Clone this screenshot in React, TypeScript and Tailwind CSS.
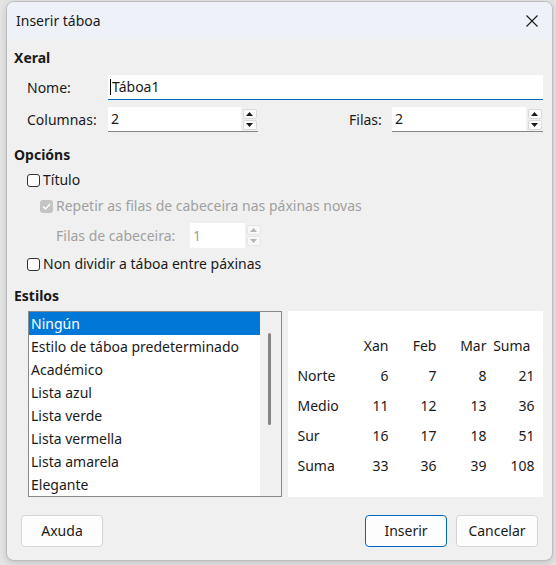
const ROWS = [
  "Ningún",
  "Estilo de táboa predeterminado",
  "Académico",
  "Lista azul",
  "Lista verde",
  "Lista vermella",
  "Lista amarela",
  "Elegante",
];

const TABLE = [
  ["", "Xan", "Feb", "Mar", "Suma"],
  ["Norte", "6", "7", "8", "21"],
  ["Medio", "11", "12", "13", "36"],
  ["Sur", "16", "17", "18", "51"],
  ["Suma", "33", "36", "39", "108"],
];

function Arrow({ up, disabled }: { up?: boolean; disabled?: boolean }) {
  return (
    <div
      className={`flex h-[10px] w-[14px] items-center justify-center rounded-[2px] border ${
        disabled ? "border-[#e6e6e6] bg-[#f7f7f7]" : "border-[#d9d9d9] bg-[#fbfbfb]"
      }`}
    >
      <svg width="7" height="4" viewBox="0 0 7 4">
        <path
          d={up ? "M0 4 L3.5 0 L7 4 Z" : "M0 0 L3.5 4 L7 0 Z"}
          fill={disabled ? "#b5b5b5" : "#1a1a1a"}
        />
      </svg>
    </div>
  );
}

function Spin({
  value,
  className,
  disabled,
}: {
  value: string;
  className: string;
  disabled?: boolean;
}) {
  return (
    <div
      className={`flex h-[25px] items-stretch ${className} ${
        disabled ? "" : "border-b border-[#868686]"
      }`}
    >
      <div
        className={`flex flex-1 items-center bg-white pl-[3px] ${
          disabled ? "text-[#a0a0a0]" : "text-[#1a1a1a]"
        }`}
      >
        {value}
      </div>
      <div className="flex w-[17px] flex-col items-center justify-center gap-[1px]">
        <Arrow up disabled={disabled} />
        <Arrow disabled={disabled} />
      </div>
    </div>
  );
}

function Check({ label, disabled, checked }: { label: string; disabled?: boolean; checked?: boolean }) {
  return (
    <div className="flex h-[16px] items-center gap-[3px]">
      {checked ? (
        <div className="flex h-[13px] w-[13px] items-center justify-center rounded-[3px] bg-[#c4c4c4]">
          <svg width="9" height="7" viewBox="0 0 9 7">
            <path d="M1 3.5 L3.5 6 L8 1" stroke="white" strokeWidth="1.3" fill="none" />
          </svg>
        </div>
      ) : (
        <div className="h-[13px] w-[13px] rounded-[3px] border border-[#333] bg-white" />
      )}
      <span className={disabled ? "text-[#a0a0a0]" : "text-[#1a1a1a]"}>{label}</span>
    </div>
  );
}

function Btn({ label, primary }: { label: string; primary?: boolean }) {
  return (
    <button
      className={`h-[32px] w-[82px] rounded-[4px] border bg-[#fdfdfd] text-[#1a1a1a] ${
        primary ? "border-[#0067c0]" : "border-[#d4d4d4]"
      }`}
    >
      {label}
    </button>
  );
}

export default function App() {
  return (
    <div className="h-[565px] w-[556px] bg-[#e4e4e4] pt-[1px] pl-[6px] font-['Noto_Sans',sans-serif] text-[14px] leading-[16px] text-[#1a1a1a]">
      <div className="flex h-[560px] w-[547px] flex-col overflow-hidden rounded-[8px] border border-[#bdbdbd] bg-[#f0f0f0] shadow-[0_2px_6px_rgba(0,0,0,0.15)]">
        <div className="flex h-[37px] shrink-0 items-center justify-between bg-[#eef2f8] pl-[9px] pr-[14px]">
          <span>Inserir táboa</span>
          <svg width="12" height="12" viewBox="0 0 12 12">
            <path d="M0.5 0.5 L11.5 11.5 M11.5 0.5 L0.5 11.5" stroke="#1a1a1a" strokeWidth="1.1" />
          </svg>
        </div>

        <div className="flex flex-1 flex-col pl-[7px] pr-[9px]">
          <div className="mt-[11px] font-bold">Xeral</div>

          <div className="mt-[9px] flex h-[25px] items-center pl-[13px]">
            <span className="w-[81px]">Nome:</span>
            <div className="flex h-[25px] flex-1 items-center border-b border-[#0067c0] bg-white pl-[2px]">
              <span className="mr-[1px] h-[16px] w-[1px] bg-black" />
              Táboa1
            </div>
          </div>

          <div className="mt-[7px] flex h-[25px] items-center pl-[13px]">
            <span className="w-[81px]">Columnas:</span>
            <Spin value="2" className="w-[150px]" />
            <span className="ml-auto w-[43px]">Filas:</span>
            <Spin value="2" className="w-[151px]" />
          </div>

          <div className="mt-[15px] font-bold">Opcións</div>

          <div className="mt-[9px] pl-[13px]">
            <Check label="Título" />
          </div>
          <div className="mt-[10px] pl-[26px]">
            <Check label="Repetir as filas de cabeceira nas páxinas novas" disabled checked />
          </div>
          <div className="mt-[9px] flex items-center pl-[42px]">
            <span className="w-[134px] text-[#a0a0a0]">Filas de cabeceira:</span>
            <Spin value="1" className="w-[72px]" disabled />
          </div>
          <div className="mt-[8px] pl-[13px]">
            <Check label="Non dividir a táboa entre páxinas" />
          </div>

          <div className="mt-[16px] font-bold">Estilos</div>

          <div className="mt-[7px] flex h-[186px] gap-[6px] pl-[14px]">
            <div className="flex w-[256px] border border-[#8a8a8a] bg-white">
              <div className="flex flex-1 flex-col">
                {ROWS.map((r, i) => (
                  <div
                    key={r}
                    className={`flex h-[23px] items-center pl-[2px] ${
                      i === 0 ? "bg-[#0078d7] text-white" : ""
                    }`}
                  >
                    {r}
                  </div>
                ))}
              </div>
              <div className="w-[21px] bg-[#f0f0f0] pt-[21px]">
                <div className="ml-[8px] h-[92px] w-[3px] rounded-full bg-[#858585]" />
              </div>
            </div>

            <div className="w-[256px] bg-white pl-[9px] pt-[20px]">
              {TABLE.map((row, ri) => (
                <div key={ri} className="grid h-[30px] grid-cols-[43px_48px_48px_50px_48px] items-center">
                  {row.map((c, ci) => (
                    <span
                      key={ci}
                      className={ci === 0 ? "" : ri === 0 && ci === 4 ? "pr-[4px] text-right" : "text-right"}
                    >
                      {c}
                    </span>
                  ))}
                </div>
              ))}
            </div>
          </div>

          <div className="mt-[18px] flex gap-[9px] pl-[7px] pr-[5px]">
            <Btn label="Axuda" />
            <div className="flex-1" />
            <Btn label="Inserir" primary />
            <Btn label="Cancelar" />
          </div>
        </div>
      </div>
    </div>
  );
}
